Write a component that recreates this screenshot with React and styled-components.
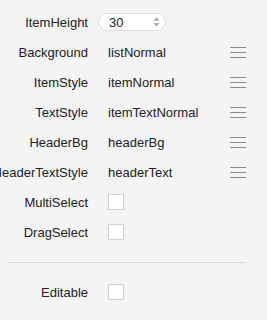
import styled, { createGlobalStyle } from 'styled-components';

const GlobalStyle = createGlobalStyle`
	html, body {
		margin: 0;
		padding: 0;
		background: #f4f4f4;
		overflow: hidden;
	}
`;

const Panel = styled.div`
	width: 267px;
	height: 320px;
	box-sizing: border-box;
	padding: 7px 20px 0 0;
	border-left: 1px solid #e8e8e8;
	margin-left: -1px;
	font-family: 'Liberation Sans', Arial, sans-serif;
	font-size: 13px;
	color: #222;
`;

const Row = styled.div`
	display: grid;
	grid-template-columns: 87px 1fr 16px;
	column-gap: 10px;
	align-items: center;
	height: 30px;
	padding-left: 1px;
`;

const Label = styled.div`
	display: flex;
	justify-content: flex-end;
	white-space: nowrap;
`;

const Value = styled.div`
	padding-left: 10px;
	white-space: nowrap;
	grid-column: ${({ $wide }) => ($wide ? '2 / 4' : 'auto')};
`;

const Spin = styled.div`
	display: flex;
	align-items: center;
	justify-content: space-between;
	box-sizing: border-box;
	width: 68px;
	height: 18px;
	padding: 0 5px 0 10px;
	background: #fff;
	border: 1px solid #dedede;
	border-radius: 9px;
`;

const Menu = styled.div`
	display: flex;
	flex-direction: column;
	gap: 4px;
	width: 16px;

	& span {
		display: block;
		height: 1px;
		background: #8a8a8a;
	}
`;

const Check = styled.div`
	margin-left: 10px;
	width: 16px;
	height: 16px;
	box-sizing: border-box;
	background: #fff;
	border: 1px solid #cfcfcf;
`;

const Divider = styled.div`
	height: 1px;
	background: #dcdcdc;
	margin: 15px 0 14px 7px;
`;

const Arrows = () => (
	<svg width="7" height="12" viewBox="0 0 7 12">
		<path d="M3.5 1 L6.5 5 L0.5 5 Z" fill="#b0b0b0" />
		<path d="M3.5 11 L6.5 7 L0.5 7 Z" fill="#b0b0b0" />
	</svg>
);

const MenuIcon = () => (
	<Menu>
		<span />
		<span />
		<span />
	</Menu>
);

const styleRows = [
	['Background', 'listNormal'],
	['ItemStyle', 'itemNormal'],
	['TextStyle', 'itemTextNormal'],
	['HeaderBg', 'headerBg'],
	['HeaderTextStyle', 'headerText'],
];

export default function App() {
	return (
		<>
			<GlobalStyle />
			<Panel>
				<Row>
					<Label>ItemHeight</Label>
					<Spin>
						<span>30</span>
						<Arrows />
					</Spin>
				</Row>
				{styleRows.map(([label, value]) => (
					<Row key={label}>
						<Label>{label}</Label>
						<Value>{value}</Value>
						<MenuIcon />
					</Row>
				))}
				<Row>
					<Label>MultiSelect</Label>
					<Check />
				</Row>
				<Row>
					<Label>DragSelect</Label>
					<Check />
				</Row>
				<Divider />
				<Row>
					<Label>Editable</Label>
					<Check />
				</Row>
			</Panel>
		</>
	);
}
